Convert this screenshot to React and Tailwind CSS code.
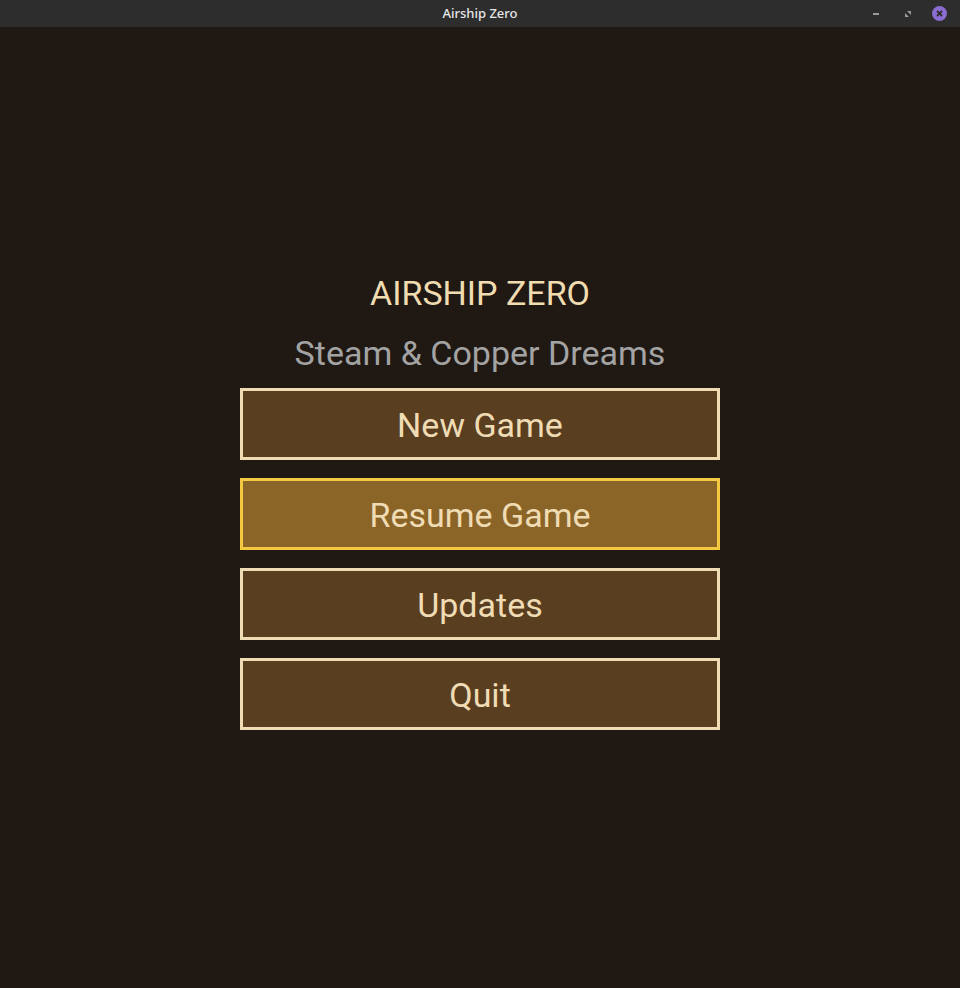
import React from 'react';

const buttons = [
    { label: 'New Game', active: false },
    { label: 'Resume Game', active: true },
    { label: 'Updates', active: false },
    { label: 'Quit', active: false }
];

const App = () => {
    return (
        <div className="w-[960px] h-[988px] flex flex-col bg-[#1f1813] overflow-hidden">
            {/* window title bar */}
            <div className="h-[28px] shrink-0 flex items-center justify-center relative bg-[#2d2d2d] border-b border-[#1f1813]">
                <span className="pt-[1px] text-[13px] font-medium text-[#e6e6e6] font-['Noto_Sans',sans-serif]">Airship Zero</span>
                <div className="absolute right-[13px] top-0 h-full flex items-center">
                    <span className="w-[6px] h-[2px] bg-[#9a9a9a]"></span>
                    <svg className="ml-[25px]" width="8" height="8" viewBox="0 0 8 8">
                        <path d="M3 1h4v4z" fill="#9a9a9a" />
                        <path d="M1 3v4h4z" fill="#9a9a9a" />
                    </svg>
                    <span className="ml-[20px] w-[15px] h-[15px] rounded-full bg-[#8b6cd0] flex items-center justify-center">
                        <svg width="7" height="7" viewBox="0 0 7 7">
                            <path d="M1 1l5 5M6 1l-5 5" stroke="#2d2d2d" strokeWidth="1.8" />
                        </svg>
                    </span>
                </div>
            </div>

            <div className="flex-1 flex flex-col items-center pt-[245px] font-['Roboto',sans-serif]">
                <h1 className="text-[34px] leading-[40px] text-[#f0dcb0]">AIRSHIP ZERO</h1>
                <p className="mt-[20px] text-[34px] leading-[40px] text-[#a3a3a3]">Steam &amp; Copper Dreams</p>
                <div className="mt-[15px] flex flex-col gap-[18px]">
                    {buttons.map((b) => (
                        <button
                            key={b.label}
                            className={`w-[480px] h-[72px] border-[3px] pt-[3px] flex items-center justify-center text-[34px] text-[#f0dcb4] ${b.active ? 'bg-[#8b6428] border-[#f5c842]' : 'bg-[#5a3e20] border-[#f0dcb4]'}`}
                        >
                            {b.label}
                        </button>
                    ))}
                </div>
            </div>
        </div>
    );
};

export default App;
